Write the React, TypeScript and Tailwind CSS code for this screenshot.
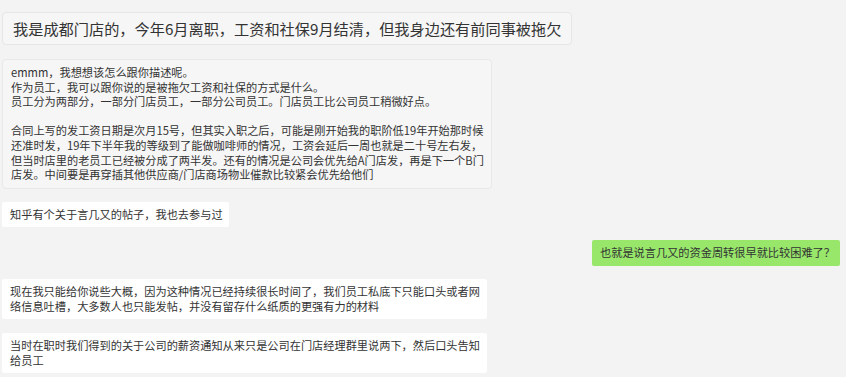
import React from 'react';

interface Bubble {
    lines: string[];
    side: 'left' | 'right';
    tone: 'grey' | 'white' | 'green';
    width: string;
    margin: string;
}

const bubbles: Bubble[] = [
    {
        lines: [
            'emmm，我想想该怎么跟你描述呢。',
            '作为员工，我可以跟你说的是被拖欠工资和社保的方式是什么。',
            '员工分为两部分，一部分门店员工，一部分公司员工。门店员工比公司员工稍微好点。',
            '',
            '合同上写的发工资日期是次月15号，但其实入职之后，可能是刚开始我的职阶低19年开始那时候',
            '还准时发，19年下半年我的等级到了能做咖啡师的情况，工资会延后一周也就是二十号左右发，',
            '但当时店里的老员工已经被分成了两半发。还有的情况是公司会优先给A门店发，再是下一个B门',
            '店发。中间要是再穿插其他供应商/门店商场物业催款比较紧会优先给他们',
        ],
        side: 'left',
        tone: 'grey',
        width: 'w-[490px]',
        margin: 'mt-[14px]',
    },
    {
        lines: ['知乎有个关于言几又的帖子，我也去参与过'],
        side: 'left',
        tone: 'white',
        width: 'w-[227px]',
        margin: 'mt-[13px]',
    },
    {
        lines: ['也就是说言几又的资金周转很早就比较困难了？'],
        side: 'right',
        tone: 'green',
        width: 'w-[248px]',
        margin: 'mt-[13px]',
    },
    {
        lines: [
            '现在我只能给你说些大概，因为这种情况已经持续很长时间了，我们员工私底下只能口头或者网',
            '络信息吐槽，大多数人也只能发帖，并没有留存什么纸质的更强有力的材料',
        ],
        side: 'left',
        tone: 'white',
        width: 'w-[485px]',
        margin: 'mt-[13px]',
    },
    {
        lines: [
            '当时在职时我们得到的关于公司的薪资通知从来只是公司在门店经理群里说两下，然后口头告知',
            '给员工',
        ],
        side: 'left',
        tone: 'white',
        width: 'w-[485px]',
        margin: 'mt-[14px]',
    },
];

const toneClass = {
    grey: 'bg-[#f6f6f6] border border-[#e8e8e8] rounded-[4px]',
    white: 'bg-white rounded-[2px]',
    green: 'bg-[#98e76b] rounded-[2px]',
};

const App: React.FC = () => {
    return (
        <div
            className="w-[846px] h-[377px] overflow-hidden bg-[#f3f3f3] pt-[12px] px-[2px] flex flex-col text-[#333333]"
            style={{ fontFamily: '"Noto Sans CJK SC", "Noto Sans", sans-serif' }}
        >
            <div className="w-[570px] h-[33px] bg-[#f6f6f6] border border-[#e6e6e6] rounded-[4px] pl-[10px] flex items-center text-[15.2px] whitespace-nowrap">
                我是成都门店的，今年6月离职，工资和社保9月结清，但我身边还有前同事被拖欠
            </div>
            {bubbles.map((b, i) => (
                <div
                    key={i}
                    className={`${b.margin} flex ${b.side === 'right' ? 'justify-end pr-[4px]' : 'justify-start'}`}
                >
                    <div
                        className={`${b.width} ${toneClass[b.tone]} px-[8px] pt-[5px] pb-[6px] text-[11.2px] leading-[14.6px] whitespace-nowrap`}
                    >
                        {b.lines.map((line, j) => (
                            <div key={j} className="h-[14.6px]">
                                {line}
                            </div>
                        ))}
                    </div>
                </div>
            ))}
        </div>
    );
};

export default App;
